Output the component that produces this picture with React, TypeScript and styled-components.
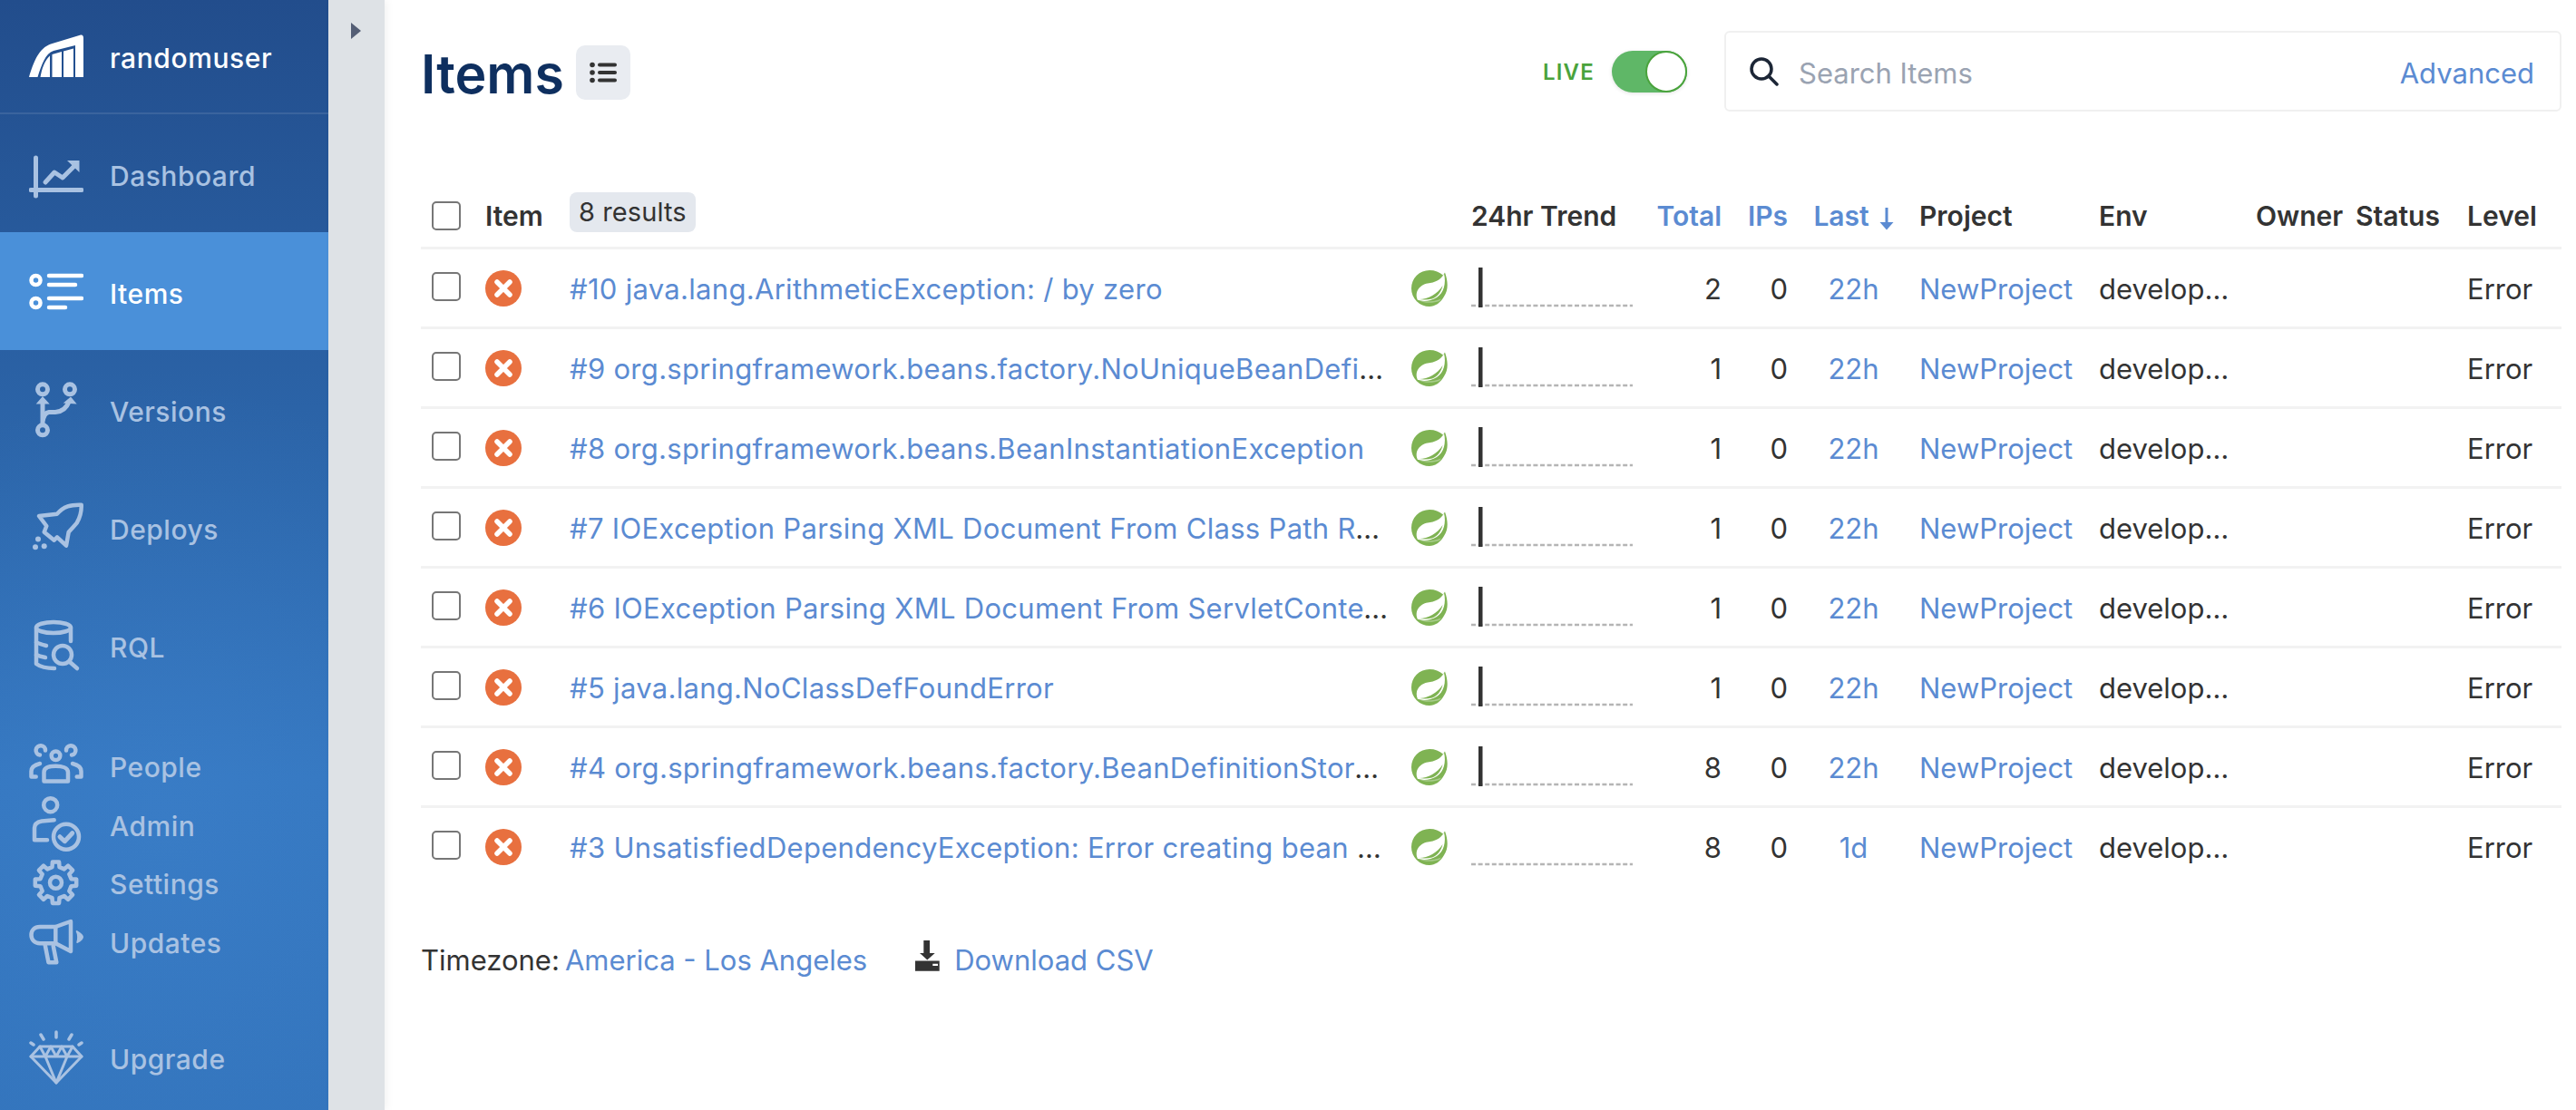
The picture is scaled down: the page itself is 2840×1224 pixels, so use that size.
import React from "react";
import styled, { createGlobalStyle } from "styled-components";

const Global = createGlobalStyle`
  html, body { margin: 0; padding: 0; background: #fff; }
  body { font-family: Inter, "Noto Sans", "Liberation Sans", sans-serif; color: #333; overflow: hidden; }
  * { box-sizing: border-box; }
`;

const Page = styled.div`
  display: flex;
  width: 2840px;
  height: 1224px;
  overflow: hidden;
`;

const Sidebar = styled.nav`
  width: 362px;
  flex: none;
  height: 1224px;
  overflow: hidden;
  background:
    radial-gradient(ellipse 420px 480px at 180px 900px, rgba(70, 140, 215, 0.28), rgba(70, 140, 215, 0) 100%),
    linear-gradient(180deg, #224d8c 0%, #2d68ad 45%, #3476bf 70%, #3374bc 100%);
`;

const Brand = styled.div`
  height: 126px;
  display: flex;
  align-items: center;
  gap: 29px;
  padding: 0 0 0 32px;
  border-bottom: 2px solid rgba(255, 255, 255, 0.1);
  color: #fff;
  font-size: 30px;
  font-weight: 500;
  letter-spacing: 0.6px;
`;

const NavLabel = styled.span`
  margin-top: 6px;
`;

const BrandLabel = styled.span`
  margin-top: 4px;
`;

const NavRow = styled.a<{ $active?: boolean; $h?: number }>`
  display: flex;
  align-items: center;
  gap: 29px;
  padding-left: 32px;
  height: ${(p) => p.$h ?? 130}px;
  font-size: 30px;
  font-weight: 500;
  letter-spacing: 0.5px;
  color: ${(p) => (p.$active ? "#fff" : "#a9c2e2")};
  background: ${(p) => (p.$active ? "#4a90d9" : "transparent")};
`;

const NavGroup = styled.div<{ $top: number }>`
  margin-top: ${(p) => p.$top}px;
`;

const Gutter = styled.div`
  width: 62px;
  flex: none;
  background: #dee2e6;
  box-shadow: 3px 0 8px rgba(0, 0, 0, 0.05);
  padding: 25px 0 0 25px;
  position: relative;
  z-index: 1;
`;

const Handle = styled.div`
  width: 0;
  height: 0;
  border-top: 9px solid transparent;
  border-bottom: 9px solid transparent;
  border-left: 11px solid #545e75;
`;

const Main = styled.main`
  flex: 1;
  min-width: 0;
  padding: 34px 16px 0 40px;
`;

const TopBar = styled.header`
  display: flex;
  align-items: center;
  height: 89px;
`;

const Title = styled.h1`
  margin: 6px 0 0 0;
  font-size: 59px;
  line-height: 60px;
  font-weight: 600;
  color: #0e2f5f;
  letter-spacing: 0;
`;

const ListButton = styled.button`
  width: 60px;
  height: 60px;
  margin: 3px 0 0 13px;
  padding: 0;
  border: 0;
  border-radius: 10px;
  background: #e9ecf1;
  display: flex;
  align-items: center;
  justify-content: center;
`;

const LiveLabel = styled.span`
  margin: 2px 0 0 auto;
  font-size: 24px;
  font-weight: 600;
  color: #4aa33c;
  letter-spacing: 1.2px;
`;

const Toggle = styled.span`
  display: flex;
  justify-content: flex-end;
  width: 83px;
  height: 46px;
  margin: 0 41px 0 19px;
  background: #5fb767;
  border-radius: 23px;
  box-shadow: 0 1px 4px rgba(0, 0, 0, 0.12);
`;

const Knob = styled.span`
  width: 46px;
  height: 46px;
  border-radius: 50%;
  background: #fff;
  border: 2px solid #4aa33c;
`;

const SearchBox = styled.label`
  width: 923px;
  height: 89px;
  display: flex;
  align-items: center;
  padding: 0 28px 0 26px;
  border: 2px solid #f0f0f0;
  border-radius: 6px;
  gap: 22px;
`;

const SearchInput = styled.input`
  flex: 1;
  min-width: 0;
  border: 0;
  outline: 0;
  padding: 4px 0 0 0;
  font: inherit;
  font-size: 31px;
  color: #333;
  &::placeholder { color: #9aa3b2; opacity: 1; }
`;

const Link = styled.a`
  color: #5b8bd2;
  text-decoration: none;
`;

const AdvancedLink = styled(Link)`
  font-size: 31px;
  margin-top: 4px;
`;

const Table = styled.table`
  table-layout: fixed;
  width: 2360px;
  margin-top: 77px;
  border-collapse: separate;
  border-spacing: 0;
  font-size: 31px;
`;

const Th = styled.th<{ $align?: string; $link?: boolean }>`
  height: 72px;
  padding: 3px 0 0 0;
  font-size: 30px;
  font-weight: 600;
  text-align: ${(p) => p.$align ?? "left"};
  color: ${(p) => (p.$link ? "#5b8bd2" : "#333")};
  white-space: nowrap;
`;

const Td = styled.td<{ $align?: string }>`
  height: 88px;
  padding: 2px 0 0 0;
  border-top: 3px solid #f2f2f2;
  text-align: ${(p) => p.$align ?? "left"};
  white-space: nowrap;
  overflow: hidden;
  text-overflow: ellipsis;
  color: #333;
`;

const TitleCell = styled(Td)`
  padding-right: 18px;
  letter-spacing: 0.3px;
`;

const EnvCell = styled(Td)`
  padding-right: 16px;
`;

const IconCell = styled(Td)`
  padding-top: 0;
  line-height: 0;
`;

const Check = styled.input.attrs({ type: "checkbox" })`
  appearance: none;
  display: block;
  width: 32px;
  height: 32px;
  margin: 0 0 4px 12px;
  border: 2px solid #767676;
  border-radius: 5px;
  background: #fff;
`;

const HeadCheck = styled(Check)`
  margin-top: 0;
  margin-bottom: 0;
`;

const ResultsBadge = styled.span`
  display: inline-block;
  height: 44px;
  line-height: 44px;
  padding: 0 10px;
  margin-bottom: 7px;
  border-radius: 8px;
  background: #e4e8ee;
  font-weight: 400;
  font-size: 29px;
  letter-spacing: 0.1px;
  color: #333;
`;

const Footer = styled.footer`
  display: flex;
  align-items: center;
  height: 44px;
  margin-top: 60px;
  font-size: 31px;
  color: #333;
`;

const ZoneLink = styled(Link)`
  margin-left: 6px;
`;

const DownloadLink = styled(Link)`
  display: flex;
  align-items: center;
  gap: 16px;
  margin-left: 52px;
`;

const IconSvg = styled.svg`
  flex: none;
  display: block;
`;

const c = "#a9c2e2";

const Stroke = ({ color = c, w = 4.5, children }: { color?: string; w?: number; children: React.ReactNode }) => (
  <g fill="none" stroke={color} strokeWidth={w} strokeLinecap="round" strokeLinejoin="round">
    {children}
  </g>
);

const NavIcon = ({ center, children }: { center: number; children: React.ReactNode }) => (
  <IconSvg width={60} height={70} viewBox={`32 ${center - 35} 60 70`}>
    {children}
  </IconSvg>
);

function gearPath(cx: number, cy: number, ro: number, ri: number, n: number) {
  const pts: string[] = [];
  for (let i = 0; i < n; i++) {
    const a = (i * 2 * Math.PI) / n - Math.PI / 2;
    const s = (Math.PI * 2) / n;
    const seq: [number, number][] = [
      [ri, a - s * 0.29],
      [ro, a - s * 0.2],
      [ro, a + s * 0.2],
      [ri, a + s * 0.29],
    ];
    for (const [r, t] of seq) pts.push(`${(cx + r * Math.cos(t)).toFixed(1)} ${(cy + r * Math.sin(t)).toFixed(1)}`);
  }
  return "M" + pts.join("L") + "Z";
}

const LogoMark = () => (
  <IconSvg width={60} height={48} viewBox="0 0 60 48">
    <g fill="#fff">
      <path d="M0 47C5 30 11 15 24 10.5L57 .5Q60 0 60 4V47H51V12L27 18C18 21 14 33 9.5 47Z" />
      <path d="M12.5 47C14 38 17 29 23 23.5V47Z" />
      <path d="M25.5 22L36 19V47H25.5Z" />
      <path d="M38 18.5L49 15.5V47H38Z" />
    </g>
  </IconSvg>
);

const DashboardIcon = () => (
  <NavIcon center={191}>
    <Stroke w={5}>
      <path d="M39.5 174V216M34 209.5H90" />
      <path d="M50 201L60 190L69 196L84 181" />
    </Stroke>
    <path d="M74 177H87.5V190Z" fill={c} />
  </NavIcon>
);

const ItemsIcon = () => (
  <NavIcon center={321}>
    <Stroke color="#fff" w={4.5}>
      <circle cx="39.5" cy="309" r="5" />
      <circle cx="39.5" cy="334" r="5" />
      <path d="M54 304H90M54 314H83M54 329H90M54 339H72" />
    </Stroke>
  </NavIcon>
);

const VersionsIcon = () => (
  <NavIcon center={451}>
    <Stroke w={5}>
      <circle cx="47" cy="429.3" r="5.5" />
      <circle cx="77" cy="429.3" r="5.5" />
      <circle cx="47" cy="474.3" r="5.5" />
      <path d="M47 468V442M47 465C48 459 50 455 54 454.5H61C68 454 73 451 76 443" />
    </Stroke>
    <path d="M39.7 445.5L47 437L54.7 445.5Z M69.7 444.5L78 437.5L84.7 445.5Z" fill={c} />
  </NavIcon>
);

const DeploysIcon = () => (
  <NavIcon center={581}>
    <Stroke w={4.5}>
      <path d="M89.7 556.7C84 556.5 79 556.8 74.7 558.3C70 560 66 563 63 566.7L43 569L51.3 580L48.7 586.7L59.7 595.7L63 592.3L73 601.7L75.7 586.7C79 583 82 580 84.7 576.7C88 571 90 564 89.7 556.7Z" />
    </Stroke>
    <g fill={c}>
      <circle cx="42" cy="594.5" r="3" />
      <circle cx="39" cy="603.3" r="3" />
      <circle cx="48.7" cy="602.3" r="3" />
    </g>
  </NavIcon>
);

const RqlIcon = () => (
  <NavIcon center={711}>
    <Stroke>
      <ellipse cx="59" cy="692" rx="19" ry="6" />
      <path d="M40 692V732C44 735 50 737 60 737M78 692V707" />
      <path d="M40 708C43 710 47 711 51 712M40 722C42 723 45 724 50 725" />
      <circle cx="69" cy="722" r="10" />
      <path d="M77 730L85 737" />
    </Stroke>
  </NavIcon>
);

const PeopleIcon = () => (
  <NavIcon center={841.5}>
    <Stroke>
      <circle cx="61.5" cy="831.7" r="4.8" />
      <path d="M48.5 860V850C48.5 845 55 843.3 61.5 843.3C68 843.3 75 845 75 850V860Z" />
      <path d="M44 831a5.2 5.2 0 1 1 6 -5M79 831a5.2 5.2 0 1 0 -6 -5" />
      <path d="M39.7 855H34.5V849C34.5 845 38 842 44 840.5M84.7 855H89.5V849C89.5 845 86 842 80 840.5" />
    </Stroke>
  </NavIcon>
);

const AdminIcon = () => (
  <NavIcon center={906}>
    <Stroke>
      <circle cx="55.7" cy="885.7" r="7.5" />
      <path d="M59.7 902.3L46 903.5C41 904.5 38 907 38 911V924.3H52" />
      <circle cx="73" cy="920.7" r="14" />
    </Stroke>
    <Stroke w={5}>
      <path d="M66 920.7L71.3 925.7L79.7 916.7" />
    </Stroke>
  </NavIcon>
);

const SettingsIcon = () => (
  <NavIcon center={970.5}>
    <Stroke>
      <path d={gearPath(61.5, 971.7, 23, 17.5, 8)} />
      <circle cx="61.5" cy="971.7" r="6.5" />
    </Stroke>
  </NavIcon>
);

const UpdatesIcon = () => (
  <NavIcon center={1035}>
    <Stroke>
      <path d="M78 1014L61.3 1020H44C38 1020 34.5 1024 34.5 1029C34.5 1034 38 1038.3 44 1038.3H61.3L78 1047Z" />
      <path d="M61.3 1020V1038.3" />
      <path d="M49.7 1040L53.5 1059.3H62.3L58.7 1041" />
    </Stroke>
    <path d="M84.7 1025C88 1027 91 1029 91 1031C91 1033 88 1035.5 85.3 1037C86.5 1034 86.5 1028 84.7 1025Z" fill={c} stroke={c} strokeWidth="2" strokeLinejoin="round" />
  </NavIcon>
);

const UpgradeIcon = () => (
  <NavIcon center={1165}>
    <Stroke w={3}>
      <path d="M44 1154H80L90 1165L62 1194L34 1165Z" />
      <path d="M34 1165H90M44 1154L50 1165L62 1194L74 1165L80 1154M50 1165L56 1154L62 1165L68 1154L74 1165" />
    </Stroke>
    <Stroke w={3.5}>
      <path d="M62 1138V1144M45 1141L48 1146M79 1141L76 1146M34 1150L37 1152M90 1150L87 1152" />
    </Stroke>
  </NavIcon>
);

const ListGlyph = () => (
  <IconSvg width={30} height={24} viewBox="0 0 30 24">
    <g fill="#333">
      <circle cx="3" cy="3.5" r="2.8" />
      <circle cx="3" cy="12" r="2.8" />
      <circle cx="3" cy="20.5" r="2.8" />
      <rect x="9" y="1.5" width="21" height="4" rx="2" />
      <rect x="9" y="10" width="21" height="4" rx="2" />
      <rect x="9" y="18.5" width="21" height="4" rx="2" />
    </g>
  </IconSvg>
);

const SearchGlyph = () => (
  <IconSvg width={32} height={32} viewBox="0 0 32 32">
    <g fill="none" stroke="#1c2636" strokeWidth="3.5" strokeLinecap="round">
      <circle cx="13" cy="13" r="11" />
      <path d="M21 21L30 30" />
    </g>
  </IconSvg>
);

const ErrorGlyph = () => (
  <IconSvg width={40} height={40} viewBox="0 0 40 40">
    <circle cx="20" cy="20" r="20" fill="#e8703f" />
    <path d="M13 13L27 27M27 13L13 27" stroke="#fff" strokeWidth="5.5" strokeLinecap="round" />
  </IconSvg>
);

const SpringGlyph = () => (
  <IconSvg width={40} height={40} viewBox="0 0 40 40">
    <path d="M20 0C26 0 31 2 35 5.5L37 2.5C40.5 12 41 22 36 29C32 36 26 40 20 40A20 20 0 0 1 20 0Z" fill="#7fb353" />
    <path d="M7 33C3 24 9 16 18 14.5C26 13.5 32 11 36 4C38.5 14 36 25 28 30C21 34.5 13 34.5 8 33Z" fill="#fff" />
    <path d="M9 32C18 32 29 26 34.5 17C33 24 29 29 23 31.5C18 32.5 13 32.8 9 32Z" fill="#7fb353" />
    <path d="M9 33.5C16 35 26 34.5 33 31.5L31 34C24 36.5 14 36.5 9 33.5Z" fill="#a8cc8c" />
  </IconSvg>
);

const TrendChart = ({ bar }: { bar: boolean }) => (
  <IconSvg width={178} height={46} viewBox="0 0 178 46">
    <line x1="0" y1="42" x2="178" y2="42" stroke="#b5b5b5" strokeWidth="2.5" strokeDasharray="5 2.6" />
    {bar && <rect x="8" y="0" width="4.5" height="44" fill="#333" />}
  </IconSvg>
);

const SortIcon = styled(IconSvg)`
  display: inline-block;
  vertical-align: -5px;
  margin-left: 11px;
`;

const SortArrow = () => (
  <SortIcon width={16} height={26} viewBox="0 0 16 26">
    <path d="M6.5 1H9.5V17H15.5L8 25.5L.5 17H6.5Z" fill="#5b8bd2" />
  </SortIcon>
);

const DownloadIcon = styled(IconSvg)`
  margin-bottom: 8px;
`;

const DownloadGlyph = () => (
  <DownloadIcon width={28} height={34} viewBox="0 0 28 34">
    <path d="M10.3 0H17V14H22.7L14.3 21.5L6 14H10.3Z" fill="#333" />
    <path fillRule="evenodd" d="M1 22.5H27.7V33.7H1ZM20.3 25.7V28H26V25.7Z" fill="#333" />
  </DownloadIcon>
);

const rows = [
  { t: "#10 java.lang.ArithmeticException: / by zero", total: 2, last: "22h", bar: true },
  { t: "#9 org.springframework.beans.factory.NoUniqueBeanDefinitionException", total: 1, last: "22h", bar: true },
  { t: "#8 org.springframework.beans.BeanInstantiationException", total: 1, last: "22h", bar: true },
  { t: "#7 IOException Parsing XML Document From Class Path Resource", total: 1, last: "22h", bar: true },
  { t: "#6 IOException Parsing XML Document From ServletContext Resource", total: 1, last: "22h", bar: true },
  { t: "#5 java.lang.NoClassDefFoundError", total: 1, last: "22h", bar: true },
  { t: "#4 org.springframework.beans.factory.BeanDefinitionStoreException", total: 8, last: "22h", bar: true },
  { t: "#3 UnsatisfiedDependencyException: Error creating bean with name", total: 8, last: "1d", bar: false },
];

const widths = [71, 93, 928, 66, 204, 72, 73, 145, 198, 173, 110, 123, 104];

export default function App() {
  return (
    <Page>
      <Global />
      <Sidebar>
        <Brand>
          <LogoMark />
          <BrandLabel>randomuser</BrandLabel>
        </Brand>
        <NavRow><DashboardIcon /><NavLabel>Dashboard</NavLabel></NavRow>
        <NavRow $active><ItemsIcon /><NavLabel>Items</NavLabel></NavRow>
        <NavRow><VersionsIcon /><NavLabel>Versions</NavLabel></NavRow>
        <NavRow><DeploysIcon /><NavLabel>Deploys</NavLabel></NavRow>
        <NavRow><RqlIcon /><NavLabel>RQL</NavLabel></NavRow>
        <NavGroup $top={35}>
          <NavRow $h={64.5}><PeopleIcon /><NavLabel>People</NavLabel></NavRow>
          <NavRow $h={64.5}><AdminIcon /><NavLabel>Admin</NavLabel></NavRow>
          <NavRow $h={64.5}><SettingsIcon /><NavLabel>Settings</NavLabel></NavRow>
          <NavRow $h={64.5}><UpdatesIcon /><NavLabel>Updates</NavLabel></NavRow>
        </NavGroup>
        <NavGroup $top={31}>
          <NavRow $h={130}><UpgradeIcon /><NavLabel>Upgrade</NavLabel></NavRow>
        </NavGroup>
      </Sidebar>
      <Gutter><Handle /></Gutter>
      <Main>
        <TopBar>
          <Title>Items</Title>
          <ListButton aria-label="list"><ListGlyph /></ListButton>
          <LiveLabel>LIVE</LiveLabel>
          <Toggle><Knob /></Toggle>
          <SearchBox>
            <SearchGlyph />
            <SearchInput placeholder="Search Items" />
            <AdvancedLink>Advanced</AdvancedLink>
          </SearchBox>
        </TopBar>
        <Table>
          <colgroup>
            {widths.map((w, i) => <col key={i} width={w} />)}
          </colgroup>
          <thead>
            <tr>
              <Th><HeadCheck /></Th>
              <Th>Item</Th>
              <Th colSpan={2}><ResultsBadge>8 results</ResultsBadge></Th>
              <Th>24hr Trend</Th>
              <Th $align="right" $link>Total</Th>
              <Th $align="right" $link>IPs</Th>
              <Th $align="center" $link>Last<SortArrow /></Th>
              <Th>Project</Th>
              <Th>Env</Th>
              <Th>Owner</Th>
              <Th>Status</Th>
              <Th>Level</Th>
            </tr>
          </thead>
          <tbody>
            {rows.map((r) => (
              <tr key={r.t}>
                <IconCell><Check /></IconCell>
                <IconCell><ErrorGlyph /></IconCell>
                <TitleCell><Link>{r.t}</Link></TitleCell>
                <IconCell><SpringGlyph /></IconCell>
                <IconCell><TrendChart bar={r.bar} /></IconCell>
                <Td $align="right">{r.total}</Td>
                <Td $align="right">0</Td>
                <Td $align="center"><Link>{r.last}</Link></Td>
                <Td><Link>NewProject</Link></Td>
                <EnvCell>development</EnvCell>
                <Td />
                <Td />
                <Td>Error</Td>
              </tr>
            ))}
          </tbody>
        </Table>
        <Footer>
          Timezone:
          <ZoneLink>America - Los Angeles</ZoneLink>
          <DownloadLink><DownloadGlyph />Download CSV</DownloadLink>
        </Footer>
      </Main>
    </Page>
  );
}
